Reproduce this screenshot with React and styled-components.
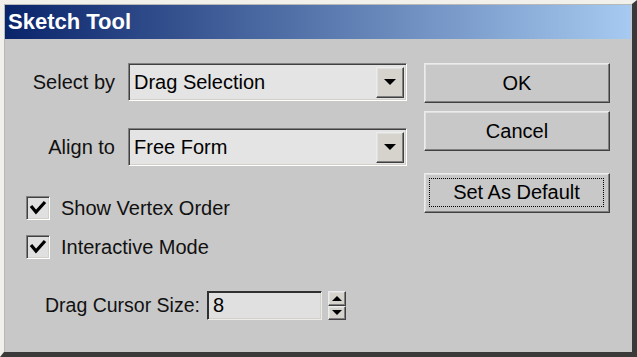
import React from 'react';
import styled, { createGlobalStyle, css } from 'styled-components';

const GlobalStyle = createGlobalStyle`
  html, body {
    margin: 0;
    padding: 0;
    background: #c8c8c8;
  }
  * {
    box-sizing: border-box;
  }
`;

const sunken = css`
  border: 1px solid;
  border-color: #808080 #ffffff #ffffff #808080;
  box-shadow: inset 1px 1px 0 #404040, inset -1px -1px 0 #d4d0c8;
`;

const raised = css`
  border: 1px solid;
  border-color: #ececec #404040 #404040 #ececec;
  box-shadow: inset -1px -1px 0 #808080, inset 1px 1px 0 #e0e0e0;
`;

const App = () => {
  return (
    <>
      <GlobalStyle />
      <Window>
        <TitleBar>Sketch Tool</TitleBar>
        <Body>
          <LeftColumn>
            <FieldRow>
              <FieldLabel>Select by</FieldLabel>
              <Combo>
                <ComboText>Drag Selection</ComboText>
                <DropButton>
                  <Arrow />
                </DropButton>
              </Combo>
            </FieldRow>
            <FieldRow $top={27}>
              <FieldLabel>Align to</FieldLabel>
              <Combo>
                <ComboText>Free Form</ComboText>
                <DropButton>
                  <Arrow />
                </DropButton>
              </Combo>
            </FieldRow>
            <CheckRow $top={30}>
              <CheckBox>
                <CheckMark />
              </CheckBox>
              <CheckLabel>Show Vertex Order</CheckLabel>
            </CheckRow>
            <CheckRow $top={15}>
              <CheckBox>
                <CheckMark />
              </CheckBox>
              <CheckLabel>Interactive Mode</CheckLabel>
            </CheckRow>
            <SpinnerRow>
              <DragLabel>Drag Cursor Size:</DragLabel>
              <SpinInput>8</SpinInput>
              <SpinButtons>
                <SpinButton>
                  <SmallArrow $up />
                </SpinButton>
                <SpinButton>
                  <SmallArrow />
                </SpinButton>
              </SpinButtons>
            </SpinnerRow>
          </LeftColumn>
          <ButtonColumn>
            <DialogButton>OK</DialogButton>
            <DialogButton $top={8}>Cancel</DialogButton>
            <DialogButton $top={22} $focused>
              <FocusRing>Set As Default</FocusRing>
            </DialogButton>
          </ButtonColumn>
        </Body>
      </Window>
    </>
  );
};

const CheckMark = () => (
  <svg width="24" height="24" viewBox="0 0 24 24">
    <polyline points="5,10 10,16 19,6" fill="none" stroke="#000" strokeWidth="3.2" />
  </svg>
);

const Window = styled.div`
  width: 637px;
  height: 357px;
  display: flex;
  flex-direction: column;
  padding: 1px;
  border-style: solid;
  border-width: 4px 5px 5px 4px;
  border-color: #f2f0ea #3a3a3a #3a3a3a #f2f0ea;
  box-shadow: inset 1px 1px 0 #b8b8b8;
  background: #c8c8c8;
  font-family: 'Liberation Sans', Arial, sans-serif;
  font-size: 20px;
  color: #111;
`;

const TitleBar = styled.div`
  height: 34px;
  flex: none;
  display: flex;
  align-items: center;
  padding-left: 3px;
  background: linear-gradient(to right, #0a246a, #a6caf0);
  color: #fff;
  font-weight: bold;
  font-size: 22px;
`;

const Body = styled.div`
  flex: 1;
  display: grid;
  grid-template-columns: 381px 186px;
  column-gap: 17px;
  padding: 24px 0 0 21px;
`;

const LeftColumn = styled.div`
  display: flex;
  flex-direction: column;
`;

const FieldRow = styled.div`
  display: flex;
  align-items: center;
  gap: 13px;
  margin-top: ${p => p.$top || 0}px;
`;

const FieldLabel = styled.span`
  width: 89px;
  text-align: right;
  white-space: nowrap;
`;

const Combo = styled.div`
  ${sunken};
  width: 279px;
  height: 38px;
  display: flex;
  align-items: center;
  padding: 2px 2px 2px 5px;
  background: #e4e4e4;
`;

const ComboText = styled.span`
  flex: 1;
  color: #000;
`;

const DropButton = styled.div`
  ${raised};
  width: 28px;
  height: 31px;
  display: flex;
  align-items: center;
  justify-content: center;
  background: #d6d3cc;
`;

const Arrow = styled.span`
  width: 0;
  height: 0;
  border-left: 6px solid transparent;
  border-right: 6px solid transparent;
  border-top: 6px solid #000;
`;

const CheckRow = styled.div`
  display: flex;
  align-items: center;
  gap: 11px;
  height: 24px;
  margin-top: ${p => p.$top || 0}px;
`;

const CheckBox = styled.div`
  ${sunken};
  width: 24px;
  height: 24px;
  display: flex;
  background: #e0e0e0;
  svg {
    margin: -1px;
  }
`;

const CheckLabel = styled.span`
  white-space: nowrap;
`;

const SpinnerRow = styled.div`
  display: flex;
  align-items: center;
  height: 29px;
  margin-top: 32px;
  padding-left: 19px;
`;

const DragLabel = styled.span`
  width: 162px;
  font-size: 19.5px;
  white-space: nowrap;
`;

const SpinInput = styled.div`
  border: 1px solid;
  border-color: #303030 #ececec #ececec #303030;
  box-shadow: inset 1px 1px 0 #303030, inset -1px -1px 0 #d4d0c8;
  width: 115px;
  height: 29px;
  display: flex;
  align-items: center;
  padding-left: 5px;
  background: #e0e0e0;
  color: #000;
`;

const SpinButtons = styled.div`
  margin-left: 6px;
  width: 18px;
  height: 29px;
  display: flex;
  flex-direction: column;
`;

const SpinButton = styled.div`
  ${raised};
  flex: 1;
  display: flex;
  align-items: center;
  justify-content: center;
  background: #d6d3cc;
`;

const SmallArrow = styled.span`
  width: 0;
  height: 0;
  border-left: 5px solid transparent;
  border-right: 5px solid transparent;
  ${p =>
    p.$up
      ? css`
          border-bottom: 5px solid #000;
        `
      : css`
          border-top: 5px solid #000;
        `}
`;

const ButtonColumn = styled.div`
  display: flex;
  flex-direction: column;
`;

const DialogButton = styled.div`
  ${raised};
  height: 40px;
  margin-top: ${p => p.$top || 0}px;
  display: flex;
  align-items: center;
  justify-content: center;
  background: #c8c8c8;
  color: #000;
  ${p =>
    p.$focused &&
    css`
      padding: 4px 5px 5px 4px;
    `}
`;

const FocusRing = styled.span`
  flex: 1;
  align-self: stretch;
  display: flex;
  align-items: center;
  justify-content: center;
  border: 1px dotted #000;
`;

export default App;
